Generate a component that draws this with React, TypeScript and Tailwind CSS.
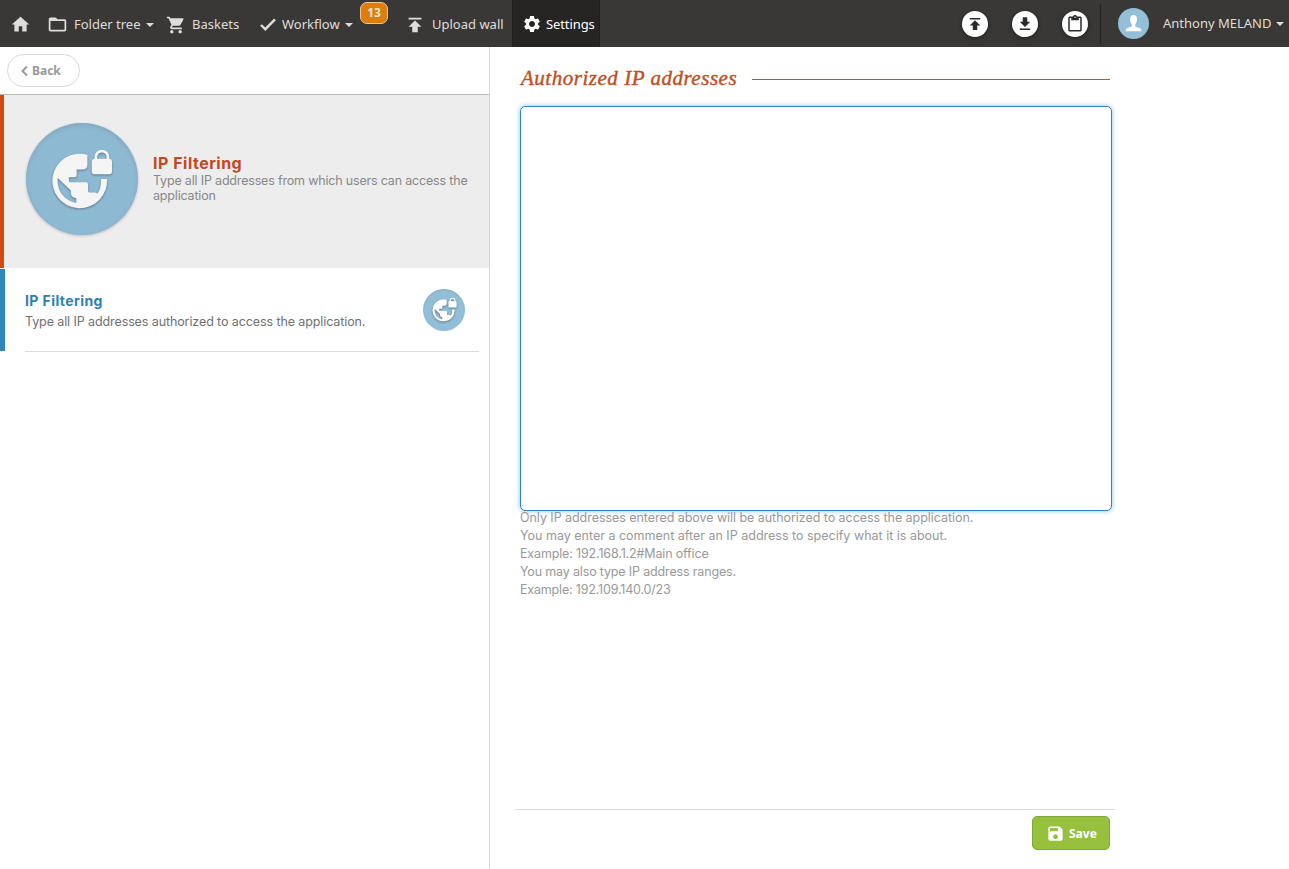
import React from 'react';
import {
    MdContentPaste,
    MdFolderOpen,
    MdGetApp,
    MdHome,
    MdPublish,
    MdSave,
    MdSettings,
    MdShoppingCart
} from 'react-icons/md';

const hints = [
    { text: 'Only IP addresses entered above will be authorized to access the application.', spacing: 'tracking-[-0.05px]' },
    { text: 'You may enter a comment after an IP address to specify what it is about.', spacing: 'tracking-normal' },
    { text: 'Example: 192.168.1.2#Main office', spacing: 'tracking-[-0.15px]' },
    { text: 'You may also type IP address ranges.', spacing: 'tracking-[-0.16px]' },
    { text: 'Example: 192.109.140.0/23', spacing: 'tracking-[-0.18px]' }
];

const Caret: React.FC = () => (
    <span className="mt-px h-0 w-0 shrink-0 border-x-4 border-t-4 border-x-transparent border-t-[#dedddc]" />
);

// Globe with a padlock in the top right corner
const GlobeLock: React.FC<{ size: number }> = ({ size }) => (
    <svg
        width={size}
        height={size}
        viewBox="20 18 184 184"
        fill="currentColor"
        className="drop-shadow-[0_1px_1px_rgba(0,0,0,0.35)]"
    >
        <path
            fillRule="evenodd"
            d="M128 38A81 81 0 1 0 186 110H168C169 128 166 142 158 154Q155 150 148 150H134Q130 150 130 144V126Q130 120 124 120H78Q73 120 73 115V105H90Q96 105 96 99V82H114Q128 82 128 68ZM40 107L79 144V150Q79 165 95 167V181C61 175 36 146 40 107Z"
        />
        <path
            fillRule="evenodd"
            d="M149 50V45A22 22 0 0 1 193 45V50Q201 51 201 58V88Q201 96 193 96H149Q141 96 141 88V58Q141 51 149 50ZM157 50H185V45A14 14 0 0 0 157 45Z"
        />
    </svg>
);

const RoundButton: React.FC<{ label: string; children: React.ReactNode }> = ({ label, children }) => (
    <button
        aria-label={label}
        className="flex h-[26px] w-[26px] items-center justify-center rounded-full bg-white text-[#2b2b2b] shadow-[0_1px_4px_rgba(0,0,0,0.5)]"
    >
        {children}
    </button>
);

const UserAvatar: React.FC = () => (
    <span className="flex h-[31px] w-[31px] shrink-0 items-center justify-center rounded-full bg-[#93bfd9]">
        <svg width="17" height="17" viewBox="0 0 17 17" fill="white">
            <path d="M8.500 0C6.300 0 5 1.500 5 4c0 2.200.7 4.100 1.700 5.100v1.800c0 .7-.5 1-1.200 1.200L2.600 13C1.300 13.400.8 14 .8 15v1.300h15.400V15c0-1-.5-1.600-1.800-2l-2.900-.9c-.7-.2-1.200-.5-1.200-1.200V9.100C11.300 8.100 12 6.200 12 4c0-2.500-1.300-4-3.500-4z" />
        </svg>
    </span>
);

const TopBar: React.FC = () => (
    <header className="flex h-[47px] shrink-0 justify-between bg-[#3a3836] font-['Noto_Sans','Open_Sans',sans-serif] text-[13px] text-[#dedddc]">
        <nav className="flex items-stretch">
            <a className="flex w-[48px] items-center pl-[10px] pt-px"><MdHome size={21} /></a>
            <a className="flex w-[118px] items-center pt-[2px]">
                <MdFolderOpen size={21} className="-ml-px" />
                <span className="ml-[6px] w-[72px] whitespace-nowrap">Folder tree</span>
                <Caret />
            </a>
            <a className="flex w-[94px] items-center pt-[2px]">
                <MdShoppingCart size={20} />
                <span className="ml-[6px]">Baskets</span>
            </a>
            <a className="relative flex w-[147px] items-center pt-[2px]">
                <svg width="16" height="13" viewBox="0 0 16 13" fill="none" stroke="currentColor" strokeWidth="2.400">
                    <path d="M1 7 5.300 11.200 15 1.400" />
                </svg>
                <span className="ml-[6px] w-[63px]">Workflow</span>
                <Caret />
                <span className="absolute left-[100px] top-[2px] flex h-[22px] w-[28px] items-center justify-center rounded-[7px] border border-[#f3c795] bg-[#dc7d0c] text-[12px] font-bold text-[#eee4d6]">
                    13
                </span>
            </a>
            <a className="flex w-[105px] items-center pt-[2px]">
                <MdPublish size={22} className="-ml-[3px]" />
                <span className="ml-[6px] whitespace-nowrap">Upload wall</span>
            </a>
            <a className="flex w-[88px] items-center border-x border-[#201f1e] bg-[#262524] pl-[9px] pt-[2px] text-white">
                <MdSettings size={20} className="mb-[2px]" />
                <span className="ml-[4px] tracking-[-0.1px]">Settings</span>
            </a>
        </nav>
        <div className="flex items-center">
            <div className="flex gap-6 pr-[12px]">
                <RoundButton label="Upload"><MdPublish size={18} /></RoundButton>
                <RoundButton label="Download"><MdGetApp size={18} /></RoundButton>
                <RoundButton label="Clipboard"><MdContentPaste size={18} /></RoundButton>
            </div>
            <span className="mr-[17px] h-[40px] w-px bg-[#232221]" />
            <UserAvatar />
            <span className="ml-[14px] w-[113px] whitespace-nowrap">Anthony MELAND</span>
            <Caret />
            <span className="w-[5px]" />
        </div>
    </header>
);

const SidePanel: React.FC = () => (
    <aside className="flex w-[490px] shrink-0 flex-col border-r border-[#d5dadd]">
        <div className="h-[48px] border-b border-[#b9b9b9] px-[7px] pt-[7px]">
            <button className="flex h-[33px] w-[73px] items-center rounded-full border border-[#d9d9d9] pl-[13px] font-['Noto_Sans',sans-serif] text-[12px] font-bold text-[#999]">
                <svg width="7" height="10" viewBox="0 0 7 10" fill="none" stroke="currentColor" strokeWidth="2">
                    <path d="M6 .5 1.500 5 6 9.500" />
                </svg>
                <span className="ml-[4px]">Back</span>
            </button>
        </div>

        {/* Section header */}
        <div className="flex h-[173px] items-center border-l-4 border-[#d4490c] bg-[#ededed] pl-[22px] pb-[5px]">
            <div className="flex h-[112px] w-[112px] shrink-0 items-center justify-center rounded-full bg-[#8eb9d3] pb-px text-[#f5f5f5] shadow-[0_1px_3px_rgba(0,0,0,0.2),inset_0_2px_5px_rgba(0,0,0,0.1)]">
                <GlobeLock size={62} />
            </div>
            <div className="mb-[2px] ml-[15px]">
                <h2 className="text-[16px] font-bold leading-[20px] tracking-[0.5px] text-[#c4481c]">IP Filtering</h2>
                <p className="whitespace-nowrap text-[12.5px] leading-[15px] tracking-[-0.18px] text-[#888]">
                    Type all IP addresses from which users can access the<br />application
                </p>
            </div>
        </div>

        {/* Selected entry */}
        <div className="mt-px flex h-[82px] border-l-[5px] border-[#2f86b7] pl-[20px] pr-[10px]">
            <div className="flex h-[83px] flex-1 shrink-0 items-center justify-between border-b border-[#d8dddd] pr-[14px]">
                <div className="pt-[2px]">
                    <h3 className="text-[14px] font-bold leading-[20px] tracking-[0.42px] text-[#2f80b2]">IP Filtering</h3>
                    <p className="whitespace-nowrap text-[12.5px] leading-[21px] tracking-[-0.1px] text-[#707070]">
                        Type all IP addresses authorized to access the application.
                    </p>
                </div>
                <div className="flex h-[42px] w-[42px] items-center justify-center rounded-full bg-[#92bed8] pb-[2px] text-white shadow-[inset_0_1px_2px_rgba(0,0,0,0.1)]">
                    <GlobeLock size={25} />
                </div>
            </div>
        </div>
    </aside>
);

const SettingsForm: React.FC = () => (
    <main className="flex w-[625px] flex-col pl-[25px]">
        <div className="ml-[6px] mr-[5px] mt-[18px] flex h-[28px] items-center">
            <h1 className="w-[231px] whitespace-nowrap font-['Liberation_Serif',serif] text-[21px] italic tracking-[0.52px] text-[#bd4f22] [-webkit-text-stroke:0.4px_#bd4f22]">
                Authorized IP addresses
            </h1>
            <span className="mt-px h-px flex-1 bg-[#b3562c]" />
        </div>
        <textarea
            className="ml-[5px] mt-[13px] block h-[405px] w-[592px] shrink-0 resize-none rounded-[5px] border border-[#2f86c4] shadow-[0_0_5px_rgba(82,168,236,0.7)] outline-none"
        />
        <div className="ml-[5px] -mt-[2px] text-[12.5px] leading-[18px] text-[#999]">
            {hints.map((hint) => (
                <p key={hint.text} className="whitespace-nowrap">
                    <span className={hint.spacing}>{hint.text}</span>
                </p>
            ))}
        </div>
        <footer className="mt-auto flex h-[60px] w-[600px] shrink-0 justify-end border-t border-[#dadedf] pr-[5px] pt-[6px]">
            <button className="flex h-[34px] w-[78px] items-center rounded-[5px] border border-[#7fa83a] bg-[#97c03d] pl-[13px] font-['Noto_Sans',sans-serif] text-[12px] font-bold text-white">
                <MdSave size={19} />
                <span className="ml-[4px] mt-[2px]">Save</span>
            </button>
        </footer>
    </main>
);

export default function App() {
    return (
        <div className="flex h-screen flex-col overflow-hidden bg-white font-['Inter','Open_Sans',sans-serif]">
            <TopBar />
            <div className="flex min-h-0 flex-1">
                <SidePanel />
                <SettingsForm />
            </div>
        </div>
    );
}
